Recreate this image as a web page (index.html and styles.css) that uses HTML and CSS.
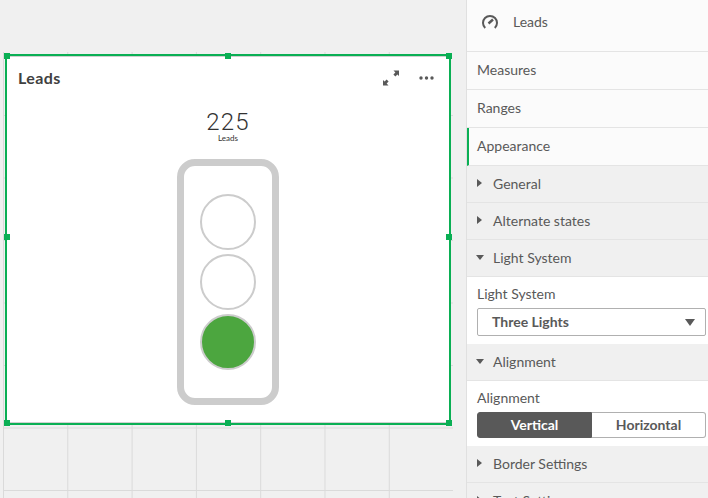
FILE: index.html
```html
<!DOCTYPE html>
<html>
    <head>
        <meta charset="utf-8">
        <meta name="viewport" content="width=device-width, initial-scale=1">
        <title>Leads</title>
        <link rel="stylesheet" href="styles.css">
    </head>
    <body>
        <main class="canvas">
            <div class="grid"></div>
            <section class="card">
                <span class="handle h-tl"></span>
                <span class="handle h-tc"></span>
                <span class="handle h-tr"></span>
                <span class="handle h-ml"></span>
                <span class="handle h-mr"></span>
                <span class="handle h-bl"></span>
                <span class="handle h-bc"></span>
                <span class="handle h-br"></span>
                <header class="card-head">
                    <h2>Leads</h2>
                    <div class="card-tools">
                        <svg class="expand" width="18" height="18" viewBox="0 0 18 18" fill="#595959">
                            <path d="M11.5 1.5H17V7l-1.6-1.6-2 2-2-2 2-2z"/>
                            <path d="M6.5 16.5H1V11l1.6 1.6 2-2 2 2-2 2z"/>
                        </svg>
                        <svg class="dots" width="15" height="4" viewBox="0 0 15 4" fill="#595959">
                            <circle cx="2" cy="2" r="1.7"/>
                            <circle cx="7.5" cy="2" r="1.7"/>
                            <circle cx="13" cy="2" r="1.7"/>
                        </svg>
                    </div>
                </header>
                <div class="kpi">
                    <div class="kpi-value">225</div>
                    <div class="kpi-label">Leads</div>
                </div>
                <div class="light-box">
                    <span class="lamp"></span>
                    <span class="lamp"></span>
                    <span class="lamp on"></span>
                </div>
            </section>
        </main>
        <aside class="panel">
            <div class="panel-title">
                <svg width="16" height="16" viewBox="0 0 16 16" fill="none" stroke="#595959" stroke-width="2">
                    <path d="M3.2 14a7 7 0 1 1 9.6 0"/>
                    <path d="M6.5 9.5L11 5.5" stroke-width="2.4"/>
                </svg>
                <span>Leads</span>
            </div>
            <div class="tab">Measures</div>
            <div class="tab">Ranges</div>
            <div class="tab active">Appearance</div>
            <div class="section"><i class="arrow"></i>General</div>
            <div class="section"><i class="arrow"></i>Alternate states</div>
            <div class="section"><i class="arrow open"></i>Light System</div>
            <div class="fields">
                <label>Light System</label>
                <div class="select">Three Lights<i class="select-arrow"></i></div>
            </div>
            <div class="section"><i class="arrow open"></i>Alignment</div>
            <div class="fields">
                <label>Alignment</label>
                <div class="switch">
                    <span class="on">Vertical</span>
                    <span>Horizontal</span>
                </div>
            </div>
            <div class="section"><i class="arrow"></i>Border Settings</div>
            <div class="section"><i class="arrow"></i>Text Settings</div>
        </aside>
    </body>
</html>
```

FILE: styles.css
```css
html, body{
    height: 100%;
    margin: 0;
    overflow: hidden;
}
body{
    display: flex;
    font-family: "Lato", sans-serif;
    font-size: 14px;
    color: #595959;
}
.canvas{
    position: relative;
    width: 466px;
    flex: none;
    padding: 52px 13px 0 3px;
    box-sizing: border-box;
    background-color: #f0f0f0;
}
.grid{
    height: 100%;
    box-sizing: border-box;
    padding-top: 2px;
    background-image: linear-gradient(to right, #dadada 1px, transparent 1px);
    background-size: 64.3px 100%;
}
.grid::before{
    content: "";
    display: block;
    height: 100%;
    background-image: linear-gradient(to bottom, #dadada 1px, transparent 1px);
    background-size: 100% 62.5px;
    background-position: 0 -1.5px;
}
.card{
    position: absolute;
    left: 5px;
    top: 54px;
    width: 442px;
    height: 367px;
    background: #fff;
    border: 2px solid #0aaf54;
    box-shadow: inset 0 1px #d0d0d0, inset 0 -1px #d0d0d0;
    display: flex;
    flex-direction: column;
    align-items: center;
}
.handle{
    position: absolute;
    width: 6px;
    height: 6px;
    background: #0aaf54;
}
.h-tl{ left: -3px; top: -3px; }
.h-tc{ left: 218px; top: -3px; }
.h-tr{ right: -3px; top: -3px; }
.h-ml{ left: -3px; top: 178px; }
.h-mr{ right: -3px; top: 178px; }
.h-bl{ left: -3px; bottom: -3px; }
.h-bc{ left: 218px; bottom: -3px; }
.h-br{ right: -3px; bottom: -3px; }
.card-head{
    align-self: stretch;
    display: flex;
    justify-content: space-between;
    padding: 12px 15px 0 11px;
    height: 43px;
}
.card-head h2{
    margin: 0;
    font-size: 16px;
    line-height: 20px;
    font-weight: 700;
    letter-spacing: 0.4px;
    color: #404040;
}
.card-tools{
    display: flex;
    gap: 19px;
    align-items: flex-start;
}
.expand{
    margin-top: 1px;
}
.dots{
    margin-top: 8px;
}
.kpi{
    text-align: center;
    color: #333;
}
.kpi-value{
    font-family: "Roboto", sans-serif;
    font-weight: 300;
    font-size: 24px;
    line-height: 23px;
    letter-spacing: 1.2px;
}
.kpi-label{
    font-size: 8px;
    line-height: 9px;
}
.light-box{
    margin-top: 16px;
    box-sizing: border-box;
    width: 102px;
    height: 246px;
    border: 7px solid #cccccc;
    border-radius: 18px;
    display: flex;
    flex-direction: column;
    align-items: center;
    gap: 4px;
    padding-top: 28px;
}
.lamp{
    box-sizing: border-box;
    width: 56px;
    height: 56px;
    border: 2px solid #cccccc;
    border-radius: 50%;
}
.lamp.on{
    background: #4ca63f;
}
.panel{
    flex: 1;
    min-width: 0;
    box-sizing: border-box;
    border-left: 1px solid #e0e0e0;
    background: #f0f0f0;
}
.panel-title{
    height: 51px;
    display: flex;
    align-items: center;
    gap: 15px;
    padding-left: 15px;
    background: #fbfbfb;
    border-bottom: 1px solid #e4e4e4;
}
.panel-title svg{
    margin-bottom: 7px;
}
.panel-title span{
    margin-bottom: 9px;
}
.tab{
    box-sizing: border-box;
    height: 38px;
    line-height: 35px;
    padding-left: 10px;
    background: #fbfbfb;
    border-bottom: 1px solid #e4e4e4;
}
.tab.active{
    border-left: 2px solid #0aaf54;
    padding-left: 8px;
}
.section{
    box-sizing: border-box;
    height: 37px;
    display: flex;
    align-items: center;
    padding: 0 0 2px 10px;
    border-bottom: 1px solid #e4e4e4;
}
.arrow{
    width: 0;
    height: 0;
    margin-right: 11px;
    border-left: 5px solid #595959;
    border-top: 4px solid transparent;
    border-bottom: 4px solid transparent;
}
.arrow.open{
    margin-left: -1px;
    margin-right: 9px;
    border-top: 5px solid #595959;
    border-bottom: 0;
    border-left: 4px solid transparent;
    border-right: 4px solid transparent;
}
.fields{
    background: #fff;
    padding: 7px 2px 8px 10px;
}
.fields label{
    display: block;
    line-height: 20px;
    margin-bottom: 4px;
}
.select{
    box-sizing: border-box;
    height: 28px;
    line-height: 26px;
    padding-left: 14px;
    position: relative;
    font-weight: 700;
    border: 1px solid #b0b0b0;
    border-radius: 2px;
}
.select-arrow{
    position: absolute;
    right: 10px;
    top: 10px;
    border-top: 7px solid #595959;
    border-left: 5px solid transparent;
    border-right: 5px solid transparent;
}
.switch{
    display: flex;
    height: 26px;
    font-weight: 700;
    line-height: 24px;
    text-align: center;
}
.switch span{
    flex: 1;
    border: 1px solid #b0b0b0;
    border-left: 0;
    border-radius: 0 3px 3px 0;
}
.switch .on{
    background: #595959;
    border: 1px solid #595959;
    border-radius: 3px 0 0 3px;
    color: #fff;
}
```
